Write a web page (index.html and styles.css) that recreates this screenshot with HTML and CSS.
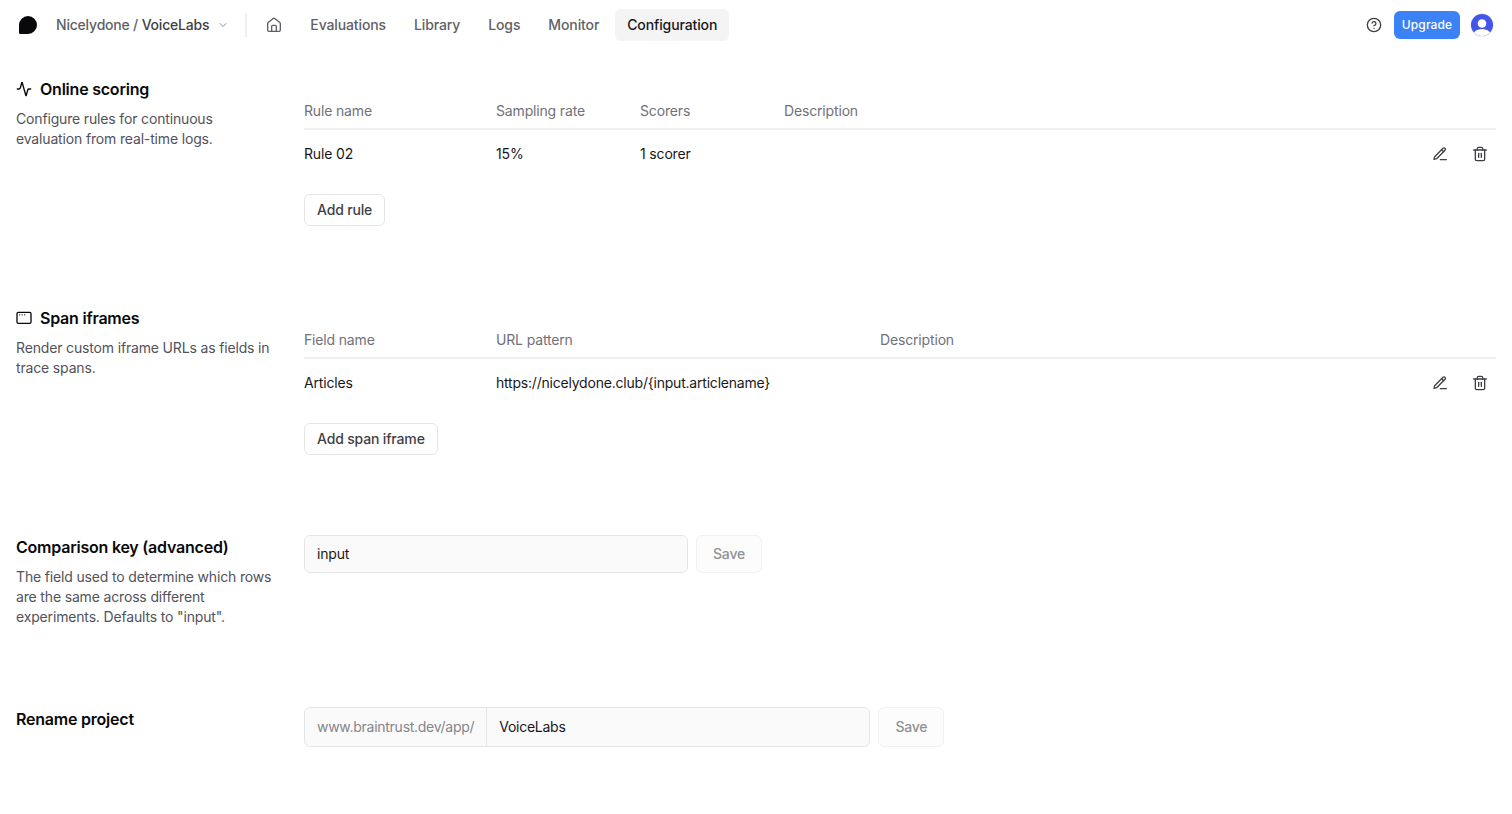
FILE: index.html
```html
<!DOCTYPE html>
<html lang="en">
<head>
    <meta charset="UTF-8">
    <meta name="viewport" content="width=device-width, initial-scale=1.0">
    <title>VoiceLabs - Configuration</title>
    <link rel="stylesheet" href="styles.css">
</head>
<body>
    <header class="topbar">
        <svg class="logo" viewBox="0 0 18 18"><path d="M9 0a9 9 0 0 1 0 18H1.2A1.2 1.2 0 0 1 0 16.800V9a9 9 0 0 1 9-9z" fill="#09090b"/></svg>
        <div class="project">
            <span class="org">Nicelydone / <span class="name">VoiceLabs</span></span>
            <svg class="icon chevron" viewBox="0 0 24 24"><path d="m6 9 6 6 6-6"/></svg>
        </div>
        <div class="divider"></div>
        <nav class="nav">
            <a class="home"><svg class="icon" viewBox="0 0 24 24"><path d="M15.500 21.500V14a1.500 1.500 0 0 0-1.500-1.500h-4A1.500 1.500 0 0 0 8.500 14v7.500"/><path d="M2.500 10a2 2 0 0 1 .8-1.600l7.500-6a2 2 0 0 1 2.400 0l7.500 6a2 2 0 0 1 .8 1.600v9.500a2 2 0 0 1-2 2h-15a2 2 0 0 1-2-2z"/></svg></a>
            <a>Evaluations</a>
            <a>Library</a>
            <a>Logs</a>
            <a>Monitor</a>
            <a class="active">Configuration</a>
        </nav>
        <div class="account">
            <svg class="icon" viewBox="0 0 24 24"><circle cx="12" cy="12" r="10"/><path d="M9.090 9a3 3 0 0 1 5.830 1c0 2-3 3-3 3"/><path d="M12 17h.01"/></svg>
            <button class="upgrade">Upgrade</button>
            <svg class="avatar" viewBox="0 0 24 24">
                <defs><clipPath id="face"><circle cx="12" cy="12" r="11"/></clipPath></defs>
                <circle cx="12" cy="12" r="11.500" fill="#e4e4ee"/>
                <g clip-path="url(#face)">
                    <rect width="24" height="24" fill="#4257ea"/>
                    <circle cx="12" cy="10.500" r="4.300" fill="#fff"/>
                    <ellipse cx="12" cy="21.500" rx="8.500" ry="5.500" fill="#fff"/>
                </g>
            </svg>
        </div>
    </header>

    <main class="settings">
        <section class="section">
            <div class="info">
                <h2><svg class="icon" viewBox="0 0 24 24"><path d="M22 12h-2.480a2 2 0 0 0-1.930 1.460l-2.350 8.360a.25.25 0 0 1-.48 0L9.240 2.180a.25.25 0 0 0-.48 0l-2.350 8.360A2 2 0 0 1 4.490 12H2"/></svg>Online scoring</h2>
                <p>Configure rules for continuous evaluation from real-time logs.</p>
            </div>
            <div class="content">
                <div class="table rules">
                    <div class="row head">
                        <span>Rule name</span>
                        <span>Sampling rate</span>
                        <span>Scorers</span>
                        <span>Description</span>
                    </div>
                    <div class="row">
                        <span>Rule 02</span>
                        <span>15%</span>
                        <span>1 scorer</span>
                        <span></span>
                        <div class="actions">
                            <svg class="icon" viewBox="0 0 24 24"><path d="M12.500 20.500h9"/><path d="M16.500 3.500a2.120 2.120 0 0 1 3 3L7 19l-4 1 1-4z"/><path d="m14.500 5.500 3 3"/></svg>
                            <svg class="icon" viewBox="0 0 24 24"><path d="M2.500 6h19"/><path d="M19 6v14a2 2 0 0 1-2 2H7a2 2 0 0 1-2-2V6"/><path d="M8 6V4a2 2 0 0 1 2-2h4a2 2 0 0 1 2 2v2"/><path d="M10 11v6"/><path d="M14 11v6"/></svg>
                        </div>
                    </div>
                </div>
                <button class="btn">Add rule</button>
            </div>
        </section>

        <section class="section">
            <div class="info">
                <h2><svg class="icon" viewBox="0 0 24 24"><rect x="1.500" y="3.500" width="21" height="16.500" rx="2"/><path d="M5.500 7.300h.01"/><path d="M9.200 7.300h.01"/><path d="M13 7.300h.01"/></svg>Span iframes</h2>
                <p>Render custom iframe URLs as fields in trace spans.</p>
            </div>
            <div class="content">
                <div class="table iframes">
                    <div class="row head">
                        <span>Field name</span>
                        <span>URL pattern</span>
                        <span>Description</span>
                    </div>
                    <div class="row">
                        <span>Articles</span>
                        <span class="url">https://nicelydone.club/{input.articlename}</span>
                        <span></span>
                        <div class="actions">
                            <svg class="icon" viewBox="0 0 24 24"><path d="M12.500 20.500h9"/><path d="M16.500 3.500a2.120 2.120 0 0 1 3 3L7 19l-4 1 1-4z"/><path d="m14.500 5.500 3 3"/></svg>
                            <svg class="icon" viewBox="0 0 24 24"><path d="M2.500 6h19"/><path d="M19 6v14a2 2 0 0 1-2 2H7a2 2 0 0 1-2-2V6"/><path d="M8 6V4a2 2 0 0 1 2-2h4a2 2 0 0 1 2 2v2"/><path d="M10 11v6"/><path d="M14 11v6"/></svg>
                        </div>
                    </div>
                </div>
                <button class="btn">Add span iframe</button>
            </div>
        </section>

        <section class="section">
            <div class="info">
                <h2>Comparison key (advanced)</h2>
                <p>The field used to determine which rows are the same across different experiments. Defaults to "input".</p>
            </div>
            <form class="field">
                <input class="input" type="text" value="input">
                <button class="btn save" disabled>Save</button>
            </form>
        </section>

        <section class="section">
            <div class="info">
                <h2>Rename project</h2>
            </div>
            <form class="field rename">
                <div class="group">
                    <span class="prefix">www.braintrust.dev/app/</span>
                    <input class="input" type="text" value="VoiceLabs">
                </div>
                <button class="btn save" disabled>Save</button>
            </form>
        </section>
    </main>
</body>
</html>
```

FILE: styles.css
```css
/* General Styles */
* {
    box-sizing: border-box;
}

body {
    margin: 0;
    background-color: #fff;
    color: #18181b;
    font-family: Inter, sans-serif;
    font-size: 14px;
    line-height: 20px;
    letter-spacing: -0.16px;
}

button, input {
    font-family: inherit;
    font-size: 14px;
    line-height: 20px;
    letter-spacing: inherit;
}

.icon {
    width: 16px;
    height: 16px;
    flex: none;
    fill: none;
    stroke: currentColor;
    stroke-width: 2;
    stroke-linecap: round;
    stroke-linejoin: round;
}

/* Top bar */
.topbar {
    display: flex;
    align-items: center;
    height: 50px;
    padding: 0 18px 0 19px;
}

.logo {
    width: 18px;
    height: 18px;
    margin-right: 19px;
}

.project {
    display: flex;
    align-items: center;
    gap: 8px;
    font-weight: 500;
    letter-spacing: -0.2px;
}

.org {
    color: #5f5f67;
}

.name {
    color: #3f3f46;
}

.chevron {
    width: 12px;
    height: 12px;
    color: #8b8b94;
}

.divider {
    width: 2px;
    height: 24px;
    margin: 0 7px 0 16px;
    background-color: #f0f0f0;
}

.nav {
    display: flex;
    gap: 4px;
    color: #5f5f67;
    font-weight: 500;
    letter-spacing: -0.12px;
}

.nav a {
    display: flex;
    align-items: center;
    height: 32px;
    padding: 0 12px;
    border-radius: 6px;
}

.nav a.active {
    background-color: #f4f4f4;
    color: #18181b;
}

.account {
    display: flex;
    align-items: center;
    margin-left: auto;
    color: #3f3f46;
}

.upgrade {
    width: 66px;
    height: 28px;
    margin: 0 10px 0 12px;
    padding: 0;
    border: none;
    border-radius: 6px;
    background-color: #3b82f6;
    color: #fff;
    font-size: 12px;
    font-weight: 500;
    letter-spacing: 0.1px;
}

.avatar {
    width: 24px;
    height: 24px;
}

/* Settings sections */
.settings {
    padding: 27px 16px 0;
}

.section {
    display: grid;
    grid-template-columns: 256px 1fr;
    gap: 32px;
    padding-bottom: 80px;
}

h2 {
    display: flex;
    align-items: center;
    gap: 8px;
    margin: 0 0 8px;
    color: #09090b;
    font-size: 16px;
    font-weight: 600;
    line-height: 24px;
    letter-spacing: -0.22px;
}

.info p {
    margin: 0;
    color: #52525b;
}

.content {
    padding-top: 16px;
}

.row {
    display: grid;
    align-items: center;
    height: 48px;
}

.rules .row {
    grid-template-columns: 192px 144px 144px 1fr auto;
}

.iframes .row {
    grid-template-columns: 192px 384px 1fr auto;
}

.row.head {
    height: 37px;
    border-bottom: 2px solid #f0f0f0;
    color: #71717a;
}

.url {
    letter-spacing: -0.21px;
}

.actions {
    display: flex;
    gap: 24px;
    padding-right: 8px;
    color: #3f3f46;
}

.btn {
    height: 32px;
    padding: 0 12px;
    border: 1px solid #e6e6e6;
    border-radius: 6px;
    background-color: #fff;
    color: #3f3f46;
    font-weight: 500;
}

.content .btn {
    margin-top: 16px;
}

/* Forms */
.field {
    display: flex;
    gap: 8px;
    height: 38px;
}

.input {
    width: 384px;
    padding: 0 12px;
    border: 1px solid #e6e6e6;
    border-radius: 6px;
    background-color: #fafafa;
    color: #18181b;
    outline: none;
}

.save {
    width: 66px;
    height: auto;
    border-color: #f1f1f1;
    background-color: #fcfcfc;
    color: #919194;
}

.rename {
    height: 40px;
    letter-spacing: -0.27px;
}

.group {
    display: flex;
    border: 1px solid #e6e6e6;
    border-radius: 6px;
    background-color: #fafafa;
}

.group .input {
    width: 383px;
    border: none;
    border-left: 1px solid #e6e6e6;
    border-radius: 0 6px 6px 0;
}

.prefix {
    display: flex;
    align-items: center;
    padding: 0 12px;
    color: #85858c;
}
```
